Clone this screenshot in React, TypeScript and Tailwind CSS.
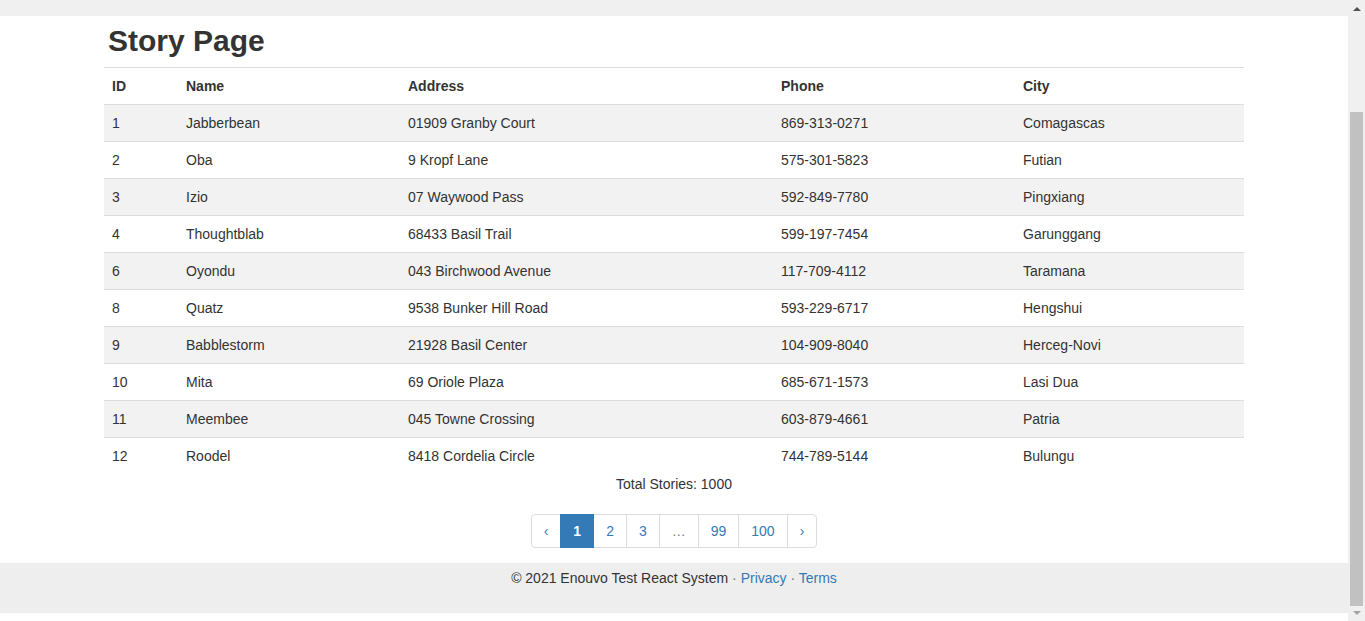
import React from "react";

interface Story {
  id: number;
  name: string;
  address: string;
  phone: string;
  city: string;
}

const stories: Story[] = [
  { id: 1, name: "Jabberbean", address: "01909 Granby Court", phone: "869-313-0271", city: "Comagascas" },
  { id: 2, name: "Oba", address: "9 Kropf Lane", phone: "575-301-5823", city: "Futian" },
  { id: 3, name: "Izio", address: "07 Waywood Pass", phone: "592-849-7780", city: "Pingxiang" },
  { id: 4, name: "Thoughtblab", address: "68433 Basil Trail", phone: "599-197-7454", city: "Garunggang" },
  { id: 6, name: "Oyondu", address: "043 Birchwood Avenue", phone: "117-709-4112", city: "Taramana" },
  { id: 8, name: "Quatz", address: "9538 Bunker Hill Road", phone: "593-229-6717", city: "Hengshui" },
  { id: 9, name: "Babblestorm", address: "21928 Basil Center", phone: "104-909-8040", city: "Herceg-Novi" },
  { id: 10, name: "Mita", address: "69 Oriole Plaza", phone: "685-671-1573", city: "Lasi Dua" },
  { id: 11, name: "Meembee", address: "045 Towne Crossing", phone: "603-879-4661", city: "Patria" },
  { id: 12, name: "Roodel", address: "8418 Cordelia Circle", phone: "744-789-5144", city: "Bulungu" },
];

const pages = ["‹", "1", "2", "3", "…", "99", "100", "›"];

const App = () => {
  return (
    <div className="flex h-[621px] overflow-hidden bg-white font-['Liberation_Sans',Arial,sans-serif] text-sm leading-5 text-[#333]">
      <div className="flex flex-1 flex-col">
        {/* 상단 네비 끝부분 */}
        <div className="h-4 bg-[#f0f0f0]"></div>

        <div className="mx-auto w-[1140px]">
          <h1 className="mb-[10px] mt-[8px] pl-1 text-[30px] font-bold leading-[33px]">Story Page</h1>

          <table className="w-full table-fixed border-collapse">
            <thead>
              <tr className="border-y border-[#ddd] text-left">
                <th className="w-[74px] p-2 font-bold">ID</th>
                <th className="w-[222px] p-2 font-bold">Name</th>
                <th className="w-[373px] p-2 font-bold">Address</th>
                <th className="w-[242px] p-2 font-bold">Phone</th>
                <th className="p-2 font-bold">City</th>
              </tr>
            </thead>
            <tbody>
              {stories.map((s, i) => (
                <tr
                  key={s.id}
                  className={`${i > 0 ? "border-t border-[#ddd]" : ""} ${i % 2 === 0 ? "bg-[#f2f2f2]" : "bg-white"}`}
                >
                  <td className="p-2">{s.id}</td>
                  <td className="p-2">{s.name}</td>
                  <td className="p-2">{s.address}</td>
                  <td className="p-2">{s.phone}</td>
                  <td className="p-2">{s.city}</td>
                </tr>
              ))}
            </tbody>
          </table>

          <p className="text-center">Total Stories: 1000</p>

          {/* 페이지네이션 */}
          <div className="mb-[15px] mt-5 flex justify-center">
            <div className="flex">
              {pages.map((p, i) => (
                <span
                  key={p}
                  className={`border px-3 py-[6px] ${i > 0 ? "-ml-px" : "rounded-l"} ${
                    i === pages.length - 1 ? "rounded-r" : ""
                  } ${
                    p === "1"
                      ? "relative border-[#337ab7] bg-[#337ab7] font-bold text-white"
                      : p === "…"
                        ? "border-[#ddd] bg-white text-[#777]"
                        : "border-[#ddd] bg-white text-[#337ab7]"
                  }`}
                >
                  {p}
                </span>
              ))}
            </div>
          </div>
        </div>

        {/* 푸터 */}
        <footer className="h-[50px] bg-[#eee] pt-[5px] text-center">
          © 2021 Enouvo Test React System <span className="text-[#777]">·</span>{" "}
          <span className="text-[#337ab7]">Privacy</span> <span className="text-[#777]">·</span>{" "}
          <span className="text-[#337ab7]">Terms</span>
        </footer>
      </div>

      {/* 스크롤바 */}
      <div className="relative flex w-[17px] flex-col bg-[#f0f0f0]">
        <div className="flex h-[17px] items-center justify-center">
          <div className="h-0 w-0 border-x-[4px] border-b-[4px] border-x-transparent border-b-[#505050]"></div>
        </div>
        <div className="absolute left-[2px] right-[2px] top-[112px] h-[494px] bg-[#c1c1c1]"></div>
        <div className="mt-auto flex h-[17px] items-center justify-center">
          <div className="h-0 w-0 border-x-[4px] border-t-[4px] border-x-transparent border-t-[#a3a3a3]"></div>
        </div>
      </div>
    </div>
  );
};

export default App;
